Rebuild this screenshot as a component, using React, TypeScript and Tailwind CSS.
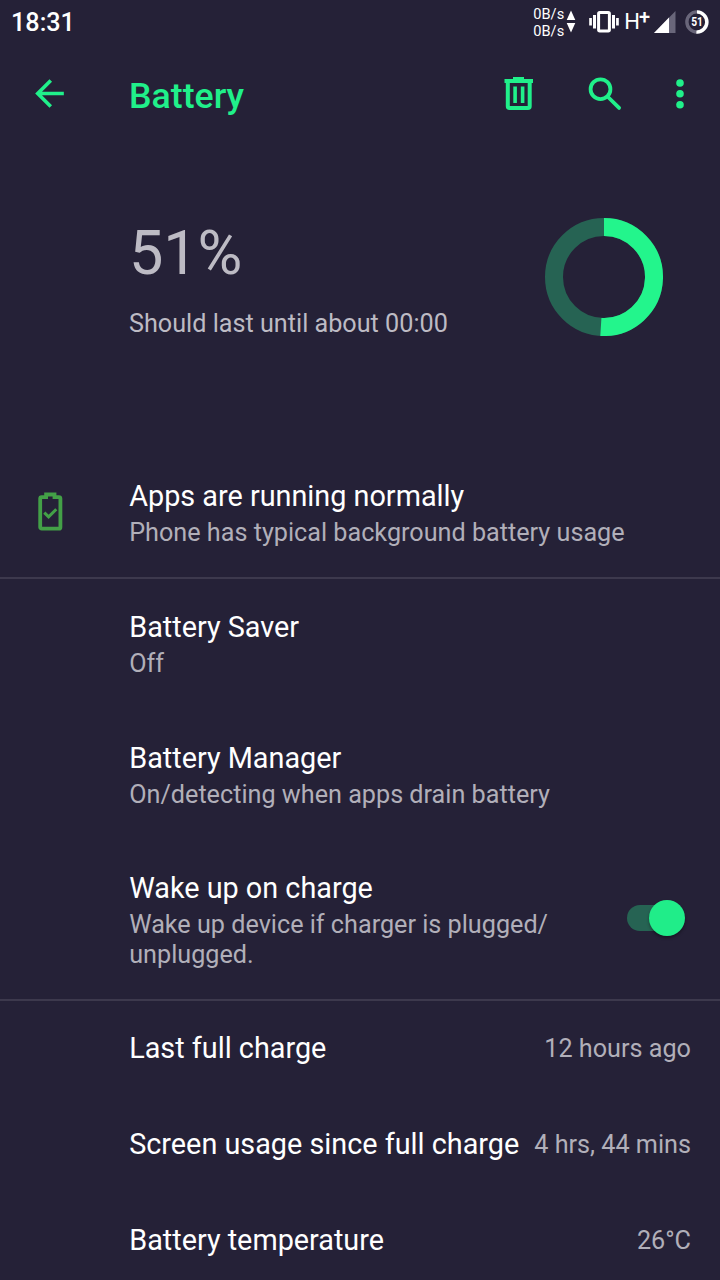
import type { ReactNode } from "react";
import clsx from "clsx";

const LEVEL = 51;

function StatusBar() {
    return (
        <div className="flex h-[43px] items-center pl-[11px] pr-[11px] text-white">
            <span className="pt-[2px] text-[25.2px] font-medium leading-[30px]">18:31</span>

            <div className="ml-auto flex flex-col text-[14.6px] leading-[16.5px] pt-[2.5px]">
                <span>0B/s</span>
                <span>0B/s</span>
            </div>
            <svg className="ml-[2px]" width="10" height="43" viewBox="0 0 10 43" fill="currentColor">
                <path d="M5 10.5 9.3 20H.7zM5 32.5 9.3 23H.7z" />
            </svg>

            {/* Vibrate */}
            <svg className="ml-[13px]" width="30" height="43" viewBox="0 0 30 43" fill="currentColor">
                <path d="M.2 18h2.7v7.5H.2zM4 15h3v13.5H4zM23 15h3v13.5h-3zM27.1 18h2.7v7.5h-2.7z" />
                <rect x="9.6" y="12.5" width="10.8" height="18.4" rx="1.2" fill="none" stroke="currentColor" strokeWidth="3" />
            </svg>

            <div className="ml-[5px] flex items-start leading-[26px]">
                <span className="text-[22px]">H</span>
                <span className="-ml-px -mt-[5px] text-[20px] font-medium">+</span>
            </div>

            {/* Signal */}
            <svg className="ml-[4px]" width="22" height="43" viewBox="0 0 22 43">
                <path d="M0 33 21.5 11v22z" fill="#69667a" />
                <path d="M0 33 15 17.6V33z" fill="#fff" />
            </svg>

            <div className="relative ml-[9px] h-6 w-6">
                <svg width="24" height="24" viewBox="0 0 24 24" fill="none" strokeWidth="3.4">
                    <circle cx="12" cy="12" r="10.1" stroke="#69667a" />
                    <path d="M12 1.9a10.1 10.1 0 1 1-.6 20.2" stroke="#fff" />
                </svg>
                <span className="absolute inset-0 flex scale-x-[0.85] items-center justify-center text-[12px] font-bold leading-none">
                    {LEVEL}
                </span>
            </div>
        </div>
    );
}

function Toolbar() {
    return (
        <header className="flex h-[101px] items-center text-[#20f08a]">
            <button className="ml-[28px]" aria-label="Back">
                <svg width="43" height="43" viewBox="0 0 24 24" fill="currentColor">
                    <path d="M20 11H7.83l5.59-5.59L12 4l-8 8 8 8 1.41-1.41L7.83 13H20v-2z" />
                </svg>
            </button>
            <h1 className="ml-[58px] pt-[5px] text-[35.7px] font-medium leading-[42px]">Battery</h1>

            <button className="ml-auto" aria-label="Delete">
                <svg width="30" height="34" viewBox="0 0 30 34" fill="currentColor">
                    <path d="M9 0h11v2h9v4H.5V2H9z" />
                    <path d="M3.8 5v24.2c0 1 .7 1.8 1.8 1.8h18.3c1 0 1.8-.8 1.8-1.8V5" fill="none" stroke="currentColor" strokeWidth="4" />
                    <path d="M9.3 9.5h3.6V26H9.3zM16.8 9.5h3.6V26h-3.6z" />
                </svg>
            </button>
            <button className="ml-[54px]" aria-label="Search">
                <svg width="34" height="34" viewBox="0 0 34 34" fill="none" stroke="currentColor" strokeWidth="3.8">
                    <circle cx="12.5" cy="12.2" r="9.9" />
                    <path d="m20.5 20.5 10.6 10.4" strokeLinecap="round" />
                </svg>
            </button>
            <button className="ml-[53px] mr-[35px]" aria-label="More options">
                <svg width="10" height="34" viewBox="0 0 10 34" fill="currentColor">
                    <circle cx="5" cy="6" r="3.8" />
                    <circle cx="5" cy="16.8" r="3.8" />
                    <circle cx="5" cy="27.7" r="3.8" />
                </svg>
            </button>
        </header>
    );
}

function BatteryHeader() {
    // point on the ring where the charged part stops
    const angle = (LEVEL / 100) * Math.PI * 2;
    const x = 59 + 50 * Math.sin(angle);
    const y = 59 - 50 * Math.cos(angle);

    return (
        <section className="flex h-[303px] items-start pl-[129px] pr-[57.4px]">
            <div className="pt-[73px] text-[#bdbbc4]">
                <div className="text-[61.2px] leading-[72px] tracking-[-0.2px]">{LEVEL}%</div>
                <div className="mt-[20px] text-[25.2px] leading-[30px]">Should last until about 00:00</div>
            </div>
            <svg className="ml-auto mt-[74px]" width="118" height="118" viewBox="0 0 118 118" fill="none" strokeWidth="18">
                <circle cx="59" cy="59" r="50" stroke="#266353" />
                <path d={`M59 9A50 50 0 ${LEVEL > 50 ? 1 : 0} 1 ${x} ${y}`} stroke="#23f58c" />
            </svg>
        </section>
    );
}

function Row({ title, summary, icon, action, className }: {
    title: string,
    summary: ReactNode,
    icon?: ReactNode,
    action?: ReactNode,
    className: string
}) {
    return (
        <div className={clsx("flex items-center border-[#3d394d]", className)}>
            <div className="flex w-[129.2px] shrink-0 pl-[38px]">{icon}</div>
            <div className="flex-1">
                <div className="text-[28.8px] leading-[38px] text-white">{title}</div>
                <div className="pt-[3px] text-[25.2px] leading-[30px] text-[#b1afb9]">{summary}</div>
            </div>
            {action}
        </div>
    );
}

function ValueRow({ title, value }: { title: string, value: string }) {
    return (
        <div className="flex h-24 items-center justify-between pl-[129.2px] pr-[29px]">
            <span className="pb-[2px] text-[28.8px] leading-[38px] text-white">{title}</span>
            <span className="text-[25.2px] leading-[30px] text-[#b1afb9]">{value}</span>
        </div>
    );
}

function BatteryOkIcon() {
    return (
        <svg className="mb-[2px]" width="25" height="39" viewBox="0 0 25 39" fill="none" stroke="#43a047" strokeWidth="3.8">
            <path d="M8.1 5.1V2.5h8.4v2.6h4.4c.8 0 1.5.7 1.5 1.5v28.6c0 .8-.7 1.5-1.5 1.5H3.7c-.8 0-1.5-.7-1.5-1.5V6.6c0-.8.7-1.5 1.5-1.5z" />
            <path d="m6.3 20.6 4.3 4.3 7.7-7.7" strokeWidth="3" />
        </svg>
    );
}

function Toggle() {
    return (
        <button className="relative mb-[3px] mr-[35px] h-[26px] w-[58px]" role="switch" aria-checked="true" aria-label="Wake up on charge">
            <span className="block h-[26px] w-[50px] rounded-full bg-[#266353]" />
            <span className="absolute -top-[5px] right-0 h-9 w-9 rounded-full bg-[#20ed89] shadow-[0_2px_3px_rgba(0,0,0,0.35)]" />
        </button>
    );
}

export default function App() {
    return (
        <div className="h-[1280px] w-[720px] overflow-hidden bg-[#252137] font-['Roboto',sans-serif]">
            <StatusBar />
            <Toolbar />
            <BatteryHeader />
            <Row
                className="border-b-2 pt-[30px] pb-[29px]"
                title="Apps are running normally"
                summary="Phone has typical background battery usage"
                icon={<BatteryOkIcon />}
            />
            <Row className="pt-[29px] pb-[31px]" title="Battery Saver" summary="Off" />
            <Row className="pt-[29px] pb-[31px]" title="Battery Manager" summary="On/detecting when apps drain battery" />
            <Row
                className="border-b-2 pt-[28px] pb-[29px]"
                title="Wake up on charge"
                summary={<>Wake up device if charger is plugged/<br />unplugged.</>}
                action={<Toggle />}
            />
            <ValueRow title="Last full charge" value="12 hours ago" />
            <ValueRow title="Screen usage since full charge" value="4 hrs, 44 mins" />
            <ValueRow title="Battery temperature" value="26°C" />
        </div>
    );
}
